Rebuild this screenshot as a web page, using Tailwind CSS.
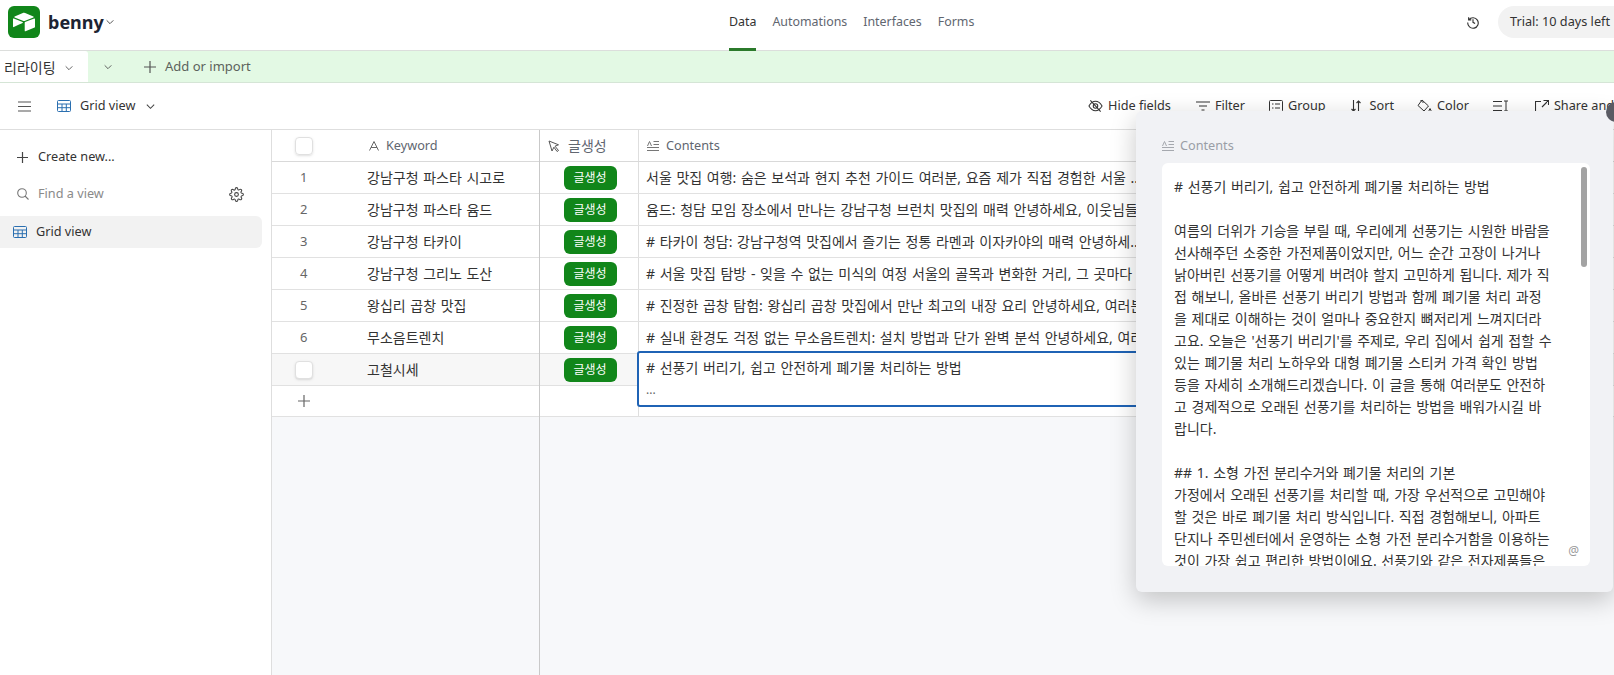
<!DOCTYPE html>
<html lang="ko">
<head>
<meta charset="utf-8">
<title>benny: Data - Airtable</title>
<meta name="viewport" content="width=device-width, initial-scale=1">
<script src="https://cdn.jsdelivr.net/npm/@tailwindcss/browser@4"></script>
</head>
<body class="relative w-[1614px] h-[675px] overflow-hidden bg-white text-[12.7px] text-[#333] font-['Noto_Sans','Noto_Sans_CJK_KR',sans-serif]">

  <!-- top bar -->
  <header class="relative flex items-center justify-between h-[51px] border-b border-[#dcdedc] pl-2 pb-[6px]">
    <div class="flex items-center">
      <div class="flex items-center justify-center w-8 h-8 rounded-md bg-[#11861a]">
        <svg class="w-[22px] h-[22px]" viewBox="0 0 24 24" fill="#fff"><path d="M11.992 1.966c-.434 0-.87.086-1.28.257L1.779 5.917c-.503.208-.49.908.012 1.116l8.982 3.558a3.266 3.266 0 0 0 2.454 0l8.982-3.558c.503-.196.503-.908.012-1.116l-8.957-3.694a3.255 3.255 0 0 0-1.272-.257zM23.4 8.056a.589.589 0 0 0-.222.045l-10.012 3.877a.612.612 0 0 0-.38.564v8.896a.6.6 0 0 0 .821.552L23.62 18.1a.583.583 0 0 0 .38-.551V8.653a.6.6 0 0 0-.6-.596zM.676 8.095a.644.644 0 0 0-.48.19C.086 8.396 0 8.53 0 8.69v8.355c0 .442.515.737.908.54l6.27-3.006.307-.147 2.969-1.436c.466-.22.43-.908-.061-1.092L.883 8.138a.57.57 0 0 0-.207-.044z"/></svg>
      </div>
      <span class="ml-2 text-[18px] font-bold text-[#1d2433]">benny</span>
      <svg class="ml-[1px] w-[10px] h-[10px]" viewBox="0 0 12 12" fill="none" stroke="#444" stroke-width="1.1"><path d="M2 4l4 4 4-4"/></svg>
    </div>
    <nav class="absolute left-[729px] top-0 flex gap-4 h-[51px] text-[12.4px] text-[#616670]">
      <a class="flex items-center h-[51px] pb-[3px] border-b-[3px] border-[#2b7a2b] text-[#333]">Data</a>
      <a class="flex items-center pb-[6px]">Automations</a>
      <a class="flex items-center pb-[6px]">Interfaces</a>
      <a class="flex items-center pb-[6px]">Forms</a>
    </nav>
    <div class="flex items-center">
      <svg class="w-[14px] h-[14px] mr-[18px]" viewBox="0 0 16 16" fill="none" stroke="#333" stroke-width="1.3"><path d="M3 2.500v3h3M3.200 5.500A6 6 0 1 1 2 8.500M8 4.800v3.600l2.400 1.400"/></svg>
      <div class="flex items-center h-8 w-[130px] -mr-[14px] pl-3 rounded-l-2xl rounded-r-2xl bg-[#f2f2f2] whitespace-nowrap">Trial: 10 days left</div>
    </div>
  </header>

  <!-- table tabs -->
  <div class="flex items-center h-8 border-b border-[#d5e5d6] bg-[#e3f9e4] text-[#5c625c]">
    <div class="flex items-center gap-2 w-[88px] h-full pl-1 pt-[2px] rounded-tr-[3px] bg-white text-[14px] text-[#333]">
      리라이팅
      <svg class="w-[10px] h-[10px]" viewBox="0 0 12 12" fill="none" stroke="#555" stroke-width="1.1"><path d="M2 4l4 4 4-4"/></svg>
    </div>
    <svg class="ml-[15px] w-[10px] h-[10px]" viewBox="0 0 12 12" fill="none" stroke="#555" stroke-width="1.1"><path d="M2 4l4 4 4-4"/></svg>
    <svg class="ml-[30px] w-[14px] h-[14px]" viewBox="0 0 14 14" fill="none" stroke="#555" stroke-width="1.2"><path d="M7 1v12M1 7h12"/></svg>
    <span class="ml-2 text-[13px]">Add or import</span>
  </div>

  <!-- view toolbar -->
  <div class="relative flex items-center h-[47px] border-b border-[#dedede]">
    <svg class="ml-[18px] w-[13px] h-[13px]" viewBox="0 0 13 13" fill="none" stroke="#555" stroke-width="1.2"><path d="M0 2h13M0 6.500h13M0 11h13"/></svg>
    <svg class="ml-[26px] w-[14px] h-[14px]" viewBox="0 0 14 14" fill="none" stroke="#2a6fb0" stroke-width="1"><rect x=".5" y="1.500" width="13" height="11" rx="1"/><path d="M.5 5h13M.5 8.700h13M5 5v7.500M9.300 5v7.500"/></svg>
    <span class="ml-[9px]">Grid view</span>
    <svg class="ml-[10px] w-[11px] h-[11px]" viewBox="0 0 12 12" fill="none" stroke="#444" stroke-width="1.1"><path d="M2 4l4 4 4-4"/></svg>

    <div class="absolute left-[1088px] top-0 flex items-center h-[46px] whitespace-nowrap">
      <svg class="w-[15px] h-[14px]" viewBox="0 0 16 14" fill="none" stroke="#333" stroke-width="1.1"><path d="M1 7c2-3.400 4.300-5 7-5s5 1.600 7 5c-2 3.400-4.300 5-7 5S3 10.400 1 7z"/><circle cx="8" cy="7" r="2.400"/><path d="M2.500 1l11 12"/></svg>
      <span class="ml-[5px]">Hide fields</span>
      <svg class="ml-[25px] w-[14px] h-[12px]" viewBox="0 0 14 12" fill="none" stroke="#333" stroke-width="1.200"><path d="M0 2h14M3 6h8M5.500 10h3"/></svg>
      <span class="ml-[5px]">Filter</span>
      <svg class="ml-[24px] w-[14px] h-[12px]" viewBox="0 0 14 12" fill="none" stroke="#333" stroke-width="1"><rect x=".5" y=".5" width="13" height="11" rx="1"/><path d="M3 4h1.500M6 4h5M3 8h1.500M6 8h5"/></svg>
      <span class="ml-[5px]">Group</span>
      <svg class="ml-[25px] w-[10px] h-[12px]" viewBox="0 0 10 12" fill="none" stroke="#333" stroke-width="1.100"><path d="M2.500 0v11M.5 9l2 2 2-2M7.500 12V1M5.500 3l2-2 2 2"/></svg>
      <span class="ml-[9px]">Sort</span>
      <svg class="ml-[23px] w-[15px] h-[14px]" viewBox="0 0 15 14" fill="none" stroke="#333" stroke-width="1"><path d="M5 1l6.500 6-4.500 5L1 6.500zM3.500 1l3 3M13 9.500l1 2a1 1 0 0 1-2 0z"/></svg>
      <span class="ml-[5px]">Color</span>
      <svg class="ml-[24px] w-[15px] h-[12px]" viewBox="0 0 15 12" fill="none" stroke="#333" stroke-width="1"><path d="M0 1.500h9M0 6h9M0 10.500h9M11 1h4M13 1v10M11 11h4"/></svg>
      <svg class="ml-[27px] w-[14px] h-[13px]" viewBox="0 0 14 13" fill="none" stroke="#333" stroke-width="1.100"><path d="M6 1.500H.5V13M7 7l6-6M8.500 .5H13.500V5"/></svg>
      <span class="ml-[5px]">Share and sync</span>
    </div>
  </div>

  <main class="flex h-[545px]">
    <!-- views sidebar -->
    <aside class="w-[272px] shrink-0 pr-[9px] border-r border-[#dedede]">
      <div class="flex items-center h-8 mt-[11px] pl-[17px]">
        <svg class="w-[11px] h-[11px]" viewBox="0 0 11 11" fill="none" stroke="#444" stroke-width="1.200"><path d="M5.500 0v11M0 5.500h11"/></svg>
        <span class="ml-[10px]">Create new...</span>
      </div>
      <div class="flex items-center h-8 mt-[5px] pl-[17px] pr-[18px]">
        <svg class="w-3 h-3" viewBox="0 0 12 12" fill="none" stroke="#777" stroke-width="1.100"><circle cx="5" cy="5" r="4.300"/><path d="M8 8l3.500 3.500"/></svg>
        <span class="ml-[9px] text-[#8a8a8a]">Find a view</span>
        <svg class="ml-auto w-[15px] h-[15px]" viewBox="0 0 24 24" fill="none" stroke="#444" stroke-width="1.700"><circle cx="12" cy="12" r="3"/><path d="M19.400 15a1.650 1.650 0 0 0 .33 1.820l.06.06a2 2 0 1 1-2.830 2.830l-.06-.06a1.650 1.650 0 0 0-2.820 1.170V21a2 2 0 1 1-4 0v-.09A1.650 1.650 0 0 0 7.270 19.740l-.06.06a2 2 0 1 1-2.830-2.830l.06-.06A1.650 1.650 0 0 0 3.270 14H3a2 2 0 1 1 0-4h.09A1.650 1.650 0 0 0 4.260 7.270l-.06-.06a2 2 0 1 1 2.830-2.830l.06.06A1.650 1.650 0 0 0 10 3.270V3a2 2 0 1 1 4 0v.09a1.650 1.650 0 0 0 2.820 1.170l.06-.06a2 2 0 1 1 2.830 2.830l-.06.06A1.650 1.650 0 0 0 20.730 10H21a2 2 0 1 1 0 4h-.09a1.650 1.650 0 0 0-1.510 1z"/></svg>
      </div>
      <div class="flex items-center h-8 mt-[6px] pl-[13px] rounded-r-md bg-[#f2f2f2]">
        <svg class="w-[14px] h-[14px]" viewBox="0 0 14 14" fill="none" stroke="#2a6fb0" stroke-width="1"><rect x=".5" y="1.500" width="13" height="11" rx="1"/><path d="M.5 5h13M.5 8.700h13M5 5v7.500M9.300 5v7.500"/></svg>
        <span class="ml-[9px]">Grid view</span>
      </div>
    </aside>

    <!-- grid -->
    <section class="relative flex flex-1 bg-[#f7f8fa]">
      <!-- frozen column -->
      <div class="w-[268px] shrink-0 border-r border-[#c9c9c9] text-[14px] [word-spacing:1px]">
        <div class="flex items-center h-8 bg-white border-b border-[#d9d9d9] text-[12.7px] text-[#616670]">
          <div class="w-[95px] pl-[23px]"><div class="w-[18px] h-[18px] rounded-[4px] border border-[#e0e0e0] shadow-sm"></div></div>
          <svg class="ml-[2px] w-[10px] h-[10px]" viewBox="0 0 10 10" fill="none" stroke="#666" stroke-width="1"><path d="M.5 9.500L5 .5l4.500 9M2 6.500h6"/></svg>
          <span class="ml-[7px]">Keyword</span>
        </div>
        <div class="flex items-center h-8 bg-white border-b border-[#e1e1e1]"><span class="w-[95px] pl-[28px] text-[13px] text-[#666]">1</span><span>강남구청 파스타 시고로</span></div>
        <div class="flex items-center h-8 bg-white border-b border-[#e1e1e1]"><span class="w-[95px] pl-[28px] text-[13px] text-[#666]">2</span><span>강남구청 파스타 윰드</span></div>
        <div class="flex items-center h-8 bg-white border-b border-[#e1e1e1]"><span class="w-[95px] pl-[28px] text-[13px] text-[#666]">3</span><span>강남구청 타카이</span></div>
        <div class="flex items-center h-8 bg-white border-b border-[#e1e1e1]"><span class="w-[95px] pl-[28px] text-[13px] text-[#666]">4</span><span>강남구청 그리노 도산</span></div>
        <div class="flex items-center h-8 bg-white border-b border-[#e1e1e1]"><span class="w-[95px] pl-[28px] text-[13px] text-[#666]">5</span><span>왕십리 곱창 맛집</span></div>
        <div class="flex items-center h-8 bg-white border-b border-[#e1e1e1]"><span class="w-[95px] pl-[28px] text-[13px] text-[#666]">6</span><span>무소음트렌치</span></div>
        <div class="flex items-center h-8 bg-[#f7f7f7] border-b border-[#e1e1e1]"><div class="w-[95px] pl-[23px]"><div class="w-[18px] h-[18px] rounded-[4px] border border-[#e0e0e0] bg-white shadow-sm"></div></div><span>고철시세</span></div>
        <div class="flex items-center h-[31px] bg-white border-b border-[#e1e1e1] pl-[26px]">
          <svg class="w-3 h-3" viewBox="0 0 12 12" fill="none" stroke="#666" stroke-width="1.200"><path d="M6 0v12M0 6h12"/></svg>
        </div>
      </div>

      <!-- scrolling columns -->
      <div class="relative flex-1 min-w-0 text-[14px] [word-spacing:1px]">
        <div class="flex items-center h-8 bg-white border-b border-[#d9d9d9] text-[#616670]">
          <div class="flex items-center w-[99px] h-full pl-2 border-r border-[#dedede]">
            <svg class="w-3 h-3" viewBox="0 0 12 12" fill="none" stroke="#555" stroke-width="1"><path d="M1 1l9.500 3.800-3.500 1.400 3.500 4.300-1.400 1-3.200-4.300L4 11z"/></svg>
            <span class="ml-2">글생성</span>
          </div>
          <svg class="ml-2 w-3 h-[10px]" viewBox="0 0 12 10" fill="none" stroke="#777" stroke-width="1"><path d="M0 9.500h12M0 6.500h12M6.500 3.500H12M6.500 .5H12M.5 5L2.500 .5 4.500 5"/></svg>
          <span class="ml-[7px] text-[12.7px]">Contents</span>
        </div>
        <div class="flex items-center h-8 bg-white border-b border-[#e1e1e1]"><div class="flex justify-center w-[99px] pl-[2px] border-r border-[#dedede] h-full items-center"><span class="flex items-center justify-center w-[53px] h-6 rounded-md bg-[#11861a] text-white text-[12px]">글생성</span></div><span class="pl-[7px] whitespace-nowrap">서울 맛집 여행: 숨은 보석과 현지 추천 가이드 여러분, 요즘 제가 직접 경험한 서울 ...</span></div>
        <div class="flex items-center h-8 bg-white border-b border-[#e1e1e1]"><div class="flex justify-center w-[99px] pl-[2px] border-r border-[#dedede] h-full items-center"><span class="flex items-center justify-center w-[53px] h-6 rounded-md bg-[#11861a] text-white text-[12px]">글생성</span></div><span class="pl-[7px] whitespace-nowrap">윰드: 청담 모임 장소에서 만나는 강남구청 브런치 맛집의 매력 안녕하세요, 이웃님들</span></div>
        <div class="flex items-center h-8 bg-white border-b border-[#e1e1e1]"><div class="flex justify-center w-[99px] pl-[2px] border-r border-[#dedede] h-full items-center"><span class="flex items-center justify-center w-[53px] h-6 rounded-md bg-[#11861a] text-white text-[12px]">글생성</span></div><span class="pl-[7px] whitespace-nowrap"># 타카이 청담: 강남구청역 맛집에서 즐기는 정통 라멘과 이자카야의 매력 안녕하세...</span></div>
        <div class="flex items-center h-8 bg-white border-b border-[#e1e1e1]"><div class="flex justify-center w-[99px] pl-[2px] border-r border-[#dedede] h-full items-center"><span class="flex items-center justify-center w-[53px] h-6 rounded-md bg-[#11861a] text-white text-[12px]">글생성</span></div><span class="pl-[7px] whitespace-nowrap"># 서울 맛집 탐방 - 잊을 수 없는 미식의 여정 서울의 골목과 변화한 거리, 그 곳마다</span></div>
        <div class="flex items-center h-8 bg-white border-b border-[#e1e1e1]"><div class="flex justify-center w-[99px] pl-[2px] border-r border-[#dedede] h-full items-center"><span class="flex items-center justify-center w-[53px] h-6 rounded-md bg-[#11861a] text-white text-[12px]">글생성</span></div><span class="pl-[7px] whitespace-nowrap"># 진정한 곱창 탐험: 왕십리 곱창 맛집에서 만난 최고의 내장 요리 안녕하세요, 여러분</span></div>
        <div class="flex items-center h-8 bg-white border-b border-[#e1e1e1]"><div class="flex justify-center w-[99px] pl-[2px] border-r border-[#dedede] h-full items-center"><span class="flex items-center justify-center w-[53px] h-6 rounded-md bg-[#11861a] text-white text-[12px]">글생성</span></div><span class="pl-[7px] whitespace-nowrap"># 실내 환경도 걱정 없는 무소음트렌치: 설치 방법과 단가 완벽 분석 안녕하세요, 여러분</span></div>
        <div class="flex items-center h-8 bg-[#f7f7f7] border-b border-[#e1e1e1]"><div class="flex justify-center w-[99px] pl-[2px] border-r border-[#dedede] h-full items-center"><span class="flex items-center justify-center w-[53px] h-6 rounded-md bg-[#11861a] text-white text-[12px]">글생성</span></div></div>
        <div class="h-[31px] bg-white border-b border-[#e1e1e1]"><div class="w-[99px] h-full border-r border-[#dedede]"></div></div>

        <!-- selected cell, grows over the row below -->
        <div class="absolute left-[97px] top-[221px] w-[600px] h-[56px] pl-[7px] pt-[4px] bg-white border-2 border-[#1f63b5] rounded-[3px] leading-[22px]">
          <div># 선풍기 버리기, 쉽고 안전하게 폐기물 처리하는 방법</div>
          <div class="text-[12px] text-[#666]">...</div>
        </div>
      </div>
    </section>
  </main>

  <!-- expanded cell panel -->
  <div class="absolute left-[1136px] top-[111px] w-[477px] h-[481px] px-[26px] rounded-md bg-[#f1f2f5] shadow-[0_8px_26px_rgba(0,0,0,0.22)]">
    <div class="flex items-center h-[52px] pt-[17px] text-[#9a9ea6]">
      <svg class="w-3 h-[10px]" viewBox="0 0 12 10" fill="none" stroke="#a5a8ae" stroke-width="1"><path d="M0 9.500h12M0 6.500h12M6.500 3.500H12M6.500 .5H12M.5 5L2.500 .5 4.500 5"/></svg>
      <span class="ml-[6px]">Contents</span>
    </div>
    <div class="relative w-[428px] h-[403px] overflow-hidden rounded-md bg-white">
      <div class="pl-3 pt-[13px] text-[14px] [word-spacing:1px] leading-[22px] text-[#333] whitespace-pre"># 선풍기 버리기, 쉽고 안전하게 폐기물 처리하는 방법

여름의 더위가 기승을 부릴 때, 우리에게 선풍기는 시원한 바람을
선사해주던 소중한 가전제품이었지만, 어느 순간 고장이 나거나
낡아버린 선풍기를 어떻게 버려야 할지 고민하게 됩니다. 제가 직
접 해보니, 올바른 선풍기 버리기 방법과 함께 폐기물 처리 과정
을 제대로 이해하는 것이 얼마나 중요한지 뼈저리게 느껴지더라
고요. 오늘은 '선풍기 버리기'를 주제로, 우리 집에서 쉽게 접할 수
있는 폐기물 처리 노하우와 대형 폐기물 스티커 가격 확인 방법
등을 자세히 소개해드리겠습니다. 이 글을 통해 여러분도 안전하
고 경제적으로 오래된 선풍기를 처리하는 방법을 배워가시길 바
랍니다.

## 1. 소형 가전 분리수거와 폐기물 처리의 기본
가정에서 오래된 선풍기를 처리할 때, 가장 우선적으로 고민해야
할 것은 바로 폐기물 처리 방식입니다. 직접 경험해보니, 아파트
단지나 주민센터에서 운영하는 소형 가전 분리수거함을 이용하는
것이 가장 쉽고 편리한 방법이에요. 선풍기와 같은 전자제품들은</div>
      <div class="absolute right-[3px] top-1 w-[6px] h-[100px] rounded-full bg-[#a3a3a3]"></div>
      <span class="absolute right-[11px] top-[379px] text-[12px] text-[#999]">@</span>
    </div>
  </div>
  <div class="absolute left-[1606px] top-[102px] w-5 h-5 rounded-full bg-[#5a5b63]"></div>
</body>
</html>
